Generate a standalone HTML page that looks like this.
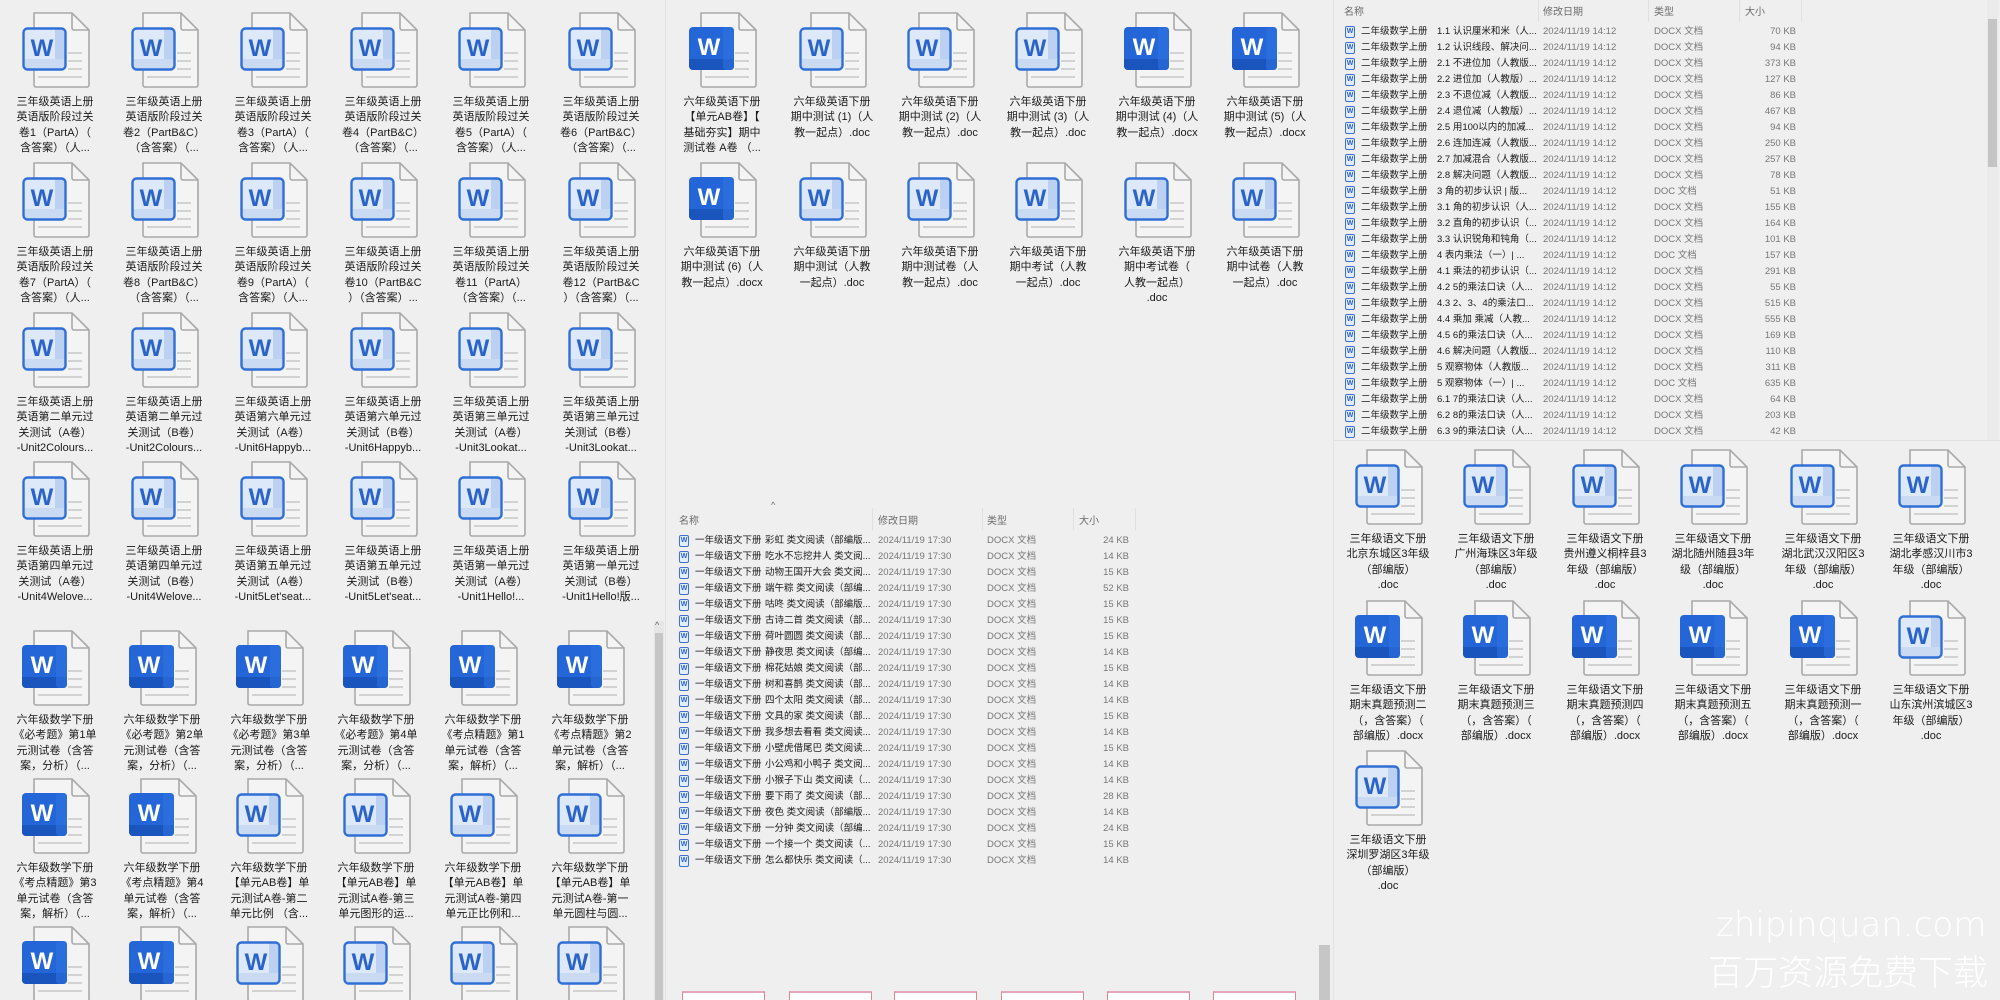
<!DOCTYPE html>
<html><head><meta charset="utf-8">
<style>
*{margin:0;padding:0;box-sizing:border-box}
html,body{width:2000px;height:1000px;overflow:hidden}
body{background:#efefef;font-family:"Liberation Sans","Noto Sans CJK SC",sans-serif;color:#1a1a1a}
#w{position:relative;width:2000px;height:1000px;overflow:hidden}
.it{position:absolute;width:110px;height:76px}
.it svg{position:absolute;left:22px;top:0;width:70px;height:76px}
.it p{position:absolute;left:0;top:83px;width:110px;text-align:center;font-size:11px;line-height:15.3px;white-space:nowrap}
.r{position:absolute;height:16px;font-size:9.5px;line-height:16px;white-space:nowrap}
.r span{position:absolute;top:0}
.r .n{overflow:hidden;width:108px}
.r .i{width:10px;height:12px;top:2px;border:1.3px solid #3d72d0;border-radius:2px;background:#e3ecfa;font-size:7px;line-height:9px;text-align:center;color:#2a64c8;font-weight:bold}
.d,.t{color:#777}
.s{color:#777;text-align:right;width:60px}
.h{position:absolute;font-size:10px;color:#6b6b6b}
.box{position:absolute;top:991px;width:83px;height:12px;border-top:2px solid #e4a5bd;border-left:1px solid #d88;border-right:1px solid #d88;background:#fff}
</style></head><body><div id="w">
<svg width="0" height="0" style="position:absolute">
<defs>
<symbol id="wo" viewBox="0 0 70 76">
<path d="M12 1H50L67 18V73a2 2 0 0 1-2 2H14a2 2 0 0 1-2-2Z" fill="#f4f4f4" stroke="#a9a9a9" stroke-width="1.6"/>
<path d="M50 1V16a2 2 0 0 0 2 2H67" fill="none" stroke="#a9a9a9" stroke-width="1.6"/>
<path d="M46 41H60M46 49H60M46 57H60M16 65H60" stroke="#d2d2d2" stroke-width="2"/>
<rect x="1.5" y="16.5" width="42" height="41" rx="4" fill="#dde8f9"/>
<rect x="33" y="17" width="10" height="40" fill="#bcd1f1"/>
<rect x="2" y="47" width="41" height="10" fill="#cbdaf3"/>
<rect x="1.5" y="16.5" width="42" height="41" rx="4" fill="none" stroke="#2f6fd6" stroke-width="2.4"/>
<text x="20" y="44" font-family="Liberation Sans" font-weight="bold" font-size="24" fill="#2a64c8" text-anchor="middle">W</text>
</symbol>
<symbol id="wf" viewBox="0 0 70 76">
<path d="M12 1H50L67 18V73a2 2 0 0 1-2 2H14a2 2 0 0 1-2-2Z" fill="#f4f4f4" stroke="#a9a9a9" stroke-width="1.6"/>
<path d="M50 1V16a2 2 0 0 0 2 2H67" fill="none" stroke="#a9a9a9" stroke-width="1.6"/>
<path d="M46 41H60M46 49H60M46 57H60M16 65H60" stroke="#d2d2d2" stroke-width="2"/>
<rect x="0" y="15" width="45" height="43" rx="4" fill="#2466d8"/>
<path d="M0 47H45V54a4 4 0 0 1-4 4H4a4 4 0 0 1-4-4Z" fill="#1a55bd"/>
<rect x="34" y="15" width="11" height="43" rx="3" fill="#2f72e0" opacity=".6"/>
<text x="20" y="43" font-family="Liberation Sans" font-weight="bold" font-size="24" fill="#fff" text-anchor="middle">W</text>
</symbol>
</defs></svg>

<div style="position:absolute;left:665px;top:0;width:1px;height:1000px;background:#e2e2e2"></div>
<div style="position:absolute;left:1333px;top:0;width:1px;height:1000px;background:#e2e2e2"></div>
<div style="position:absolute;left:654px;top:621px;width:10px;height:379px;background:#e6e6e6"></div>
<div style="position:absolute;left:655px;top:633px;width:8px;height:367px;background:#c6c6c6"></div>
<div style="position:absolute;left:655px;top:620px;font-size:9px;color:#666">^</div>
<div style="position:absolute;left:1319px;top:945px;width:11px;height:55px;background:#c6c6c6"></div>
<div style="position:absolute;left:1987px;top:0;width:11px;height:440px;background:#eaeaea"></div>
<div style="position:absolute;left:1988px;top:19px;width:9px;height:148px;background:#c4c4c4"></div>

<div class="it" style="left:0;top:12px"><svg><use href="#wo"/></svg><p>三年级英语上册<br>英语版阶段过关<br>卷1（PartA）（<br>含答案）（人...</p></div>
<div class="it" style="left:109px;top:12px"><svg><use href="#wo"/></svg><p>三年级英语上册<br>英语版阶段过关<br>卷2（PartB&amp;C）<br>（含答案）（...</p></div>
<div class="it" style="left:218px;top:12px"><svg><use href="#wo"/></svg><p>三年级英语上册<br>英语版阶段过关<br>卷3（PartA）（<br>含答案）（人...</p></div>
<div class="it" style="left:328px;top:12px"><svg><use href="#wo"/></svg><p>三年级英语上册<br>英语版阶段过关<br>卷4（PartB&amp;C）<br>（含答案）（...</p></div>
<div class="it" style="left:436px;top:12px"><svg><use href="#wo"/></svg><p>三年级英语上册<br>英语版阶段过关<br>卷5（PartA）（<br>含答案）（人...</p></div>
<div class="it" style="left:546px;top:12px"><svg><use href="#wo"/></svg><p>三年级英语上册<br>英语版阶段过关<br>卷6（PartB&amp;C）<br>（含答案）（...</p></div>

<div class="it" style="left:0;top:162px"><svg><use href="#wo"/></svg><p>三年级英语上册<br>英语版阶段过关<br>卷7（PartA）（<br>含答案）（人...</p></div>
<div class="it" style="left:109px;top:162px"><svg><use href="#wo"/></svg><p>三年级英语上册<br>英语版阶段过关<br>卷8（PartB&amp;C）<br>（含答案）（...</p></div>
<div class="it" style="left:218px;top:162px"><svg><use href="#wo"/></svg><p>三年级英语上册<br>英语版阶段过关<br>卷9（PartA）（<br>含答案）（人...</p></div>
<div class="it" style="left:328px;top:162px"><svg><use href="#wo"/></svg><p>三年级英语上册<br>英语版阶段过关<br>卷10（PartB&amp;C<br>）（含答案）...</p></div>
<div class="it" style="left:436px;top:162px"><svg><use href="#wo"/></svg><p>三年级英语上册<br>英语版阶段过关<br>卷11（PartA）<br>（含答案）（...</p></div>
<div class="it" style="left:546px;top:162px"><svg><use href="#wo"/></svg><p>三年级英语上册<br>英语版阶段过关<br>卷12（PartB&amp;C<br>）（含答案）（...</p></div>

<div class="it" style="left:0;top:312px"><svg><use href="#wo"/></svg><p>三年级英语上册<br>英语第二单元过<br>关测试（A卷）<br>-Unit2Colours...</p></div>
<div class="it" style="left:109px;top:312px"><svg><use href="#wo"/></svg><p>三年级英语上册<br>英语第二单元过<br>关测试（B卷）<br>-Unit2Colours...</p></div>
<div class="it" style="left:218px;top:312px"><svg><use href="#wo"/></svg><p>三年级英语上册<br>英语第六单元过<br>关测试（A卷）<br>-Unit6Happyb...</p></div>
<div class="it" style="left:328px;top:312px"><svg><use href="#wo"/></svg><p>三年级英语上册<br>英语第六单元过<br>关测试（B卷）<br>-Unit6Happyb...</p></div>
<div class="it" style="left:436px;top:312px"><svg><use href="#wo"/></svg><p>三年级英语上册<br>英语第三单元过<br>关测试（A卷）<br>-Unit3Lookat...</p></div>
<div class="it" style="left:546px;top:312px"><svg><use href="#wo"/></svg><p>三年级英语上册<br>英语第三单元过<br>关测试（B卷）<br>-Unit3Lookat...</p></div>

<div class="it" style="left:0;top:461px"><svg><use href="#wo"/></svg><p>三年级英语上册<br>英语第四单元过<br>关测试（A卷）<br>-Unit4Welove...</p></div>
<div class="it" style="left:109px;top:461px"><svg><use href="#wo"/></svg><p>三年级英语上册<br>英语第四单元过<br>关测试（B卷）<br>-Unit4Welove...</p></div>
<div class="it" style="left:218px;top:461px"><svg><use href="#wo"/></svg><p>三年级英语上册<br>英语第五单元过<br>关测试（A卷）<br>-Unit5Let'seat...</p></div>
<div class="it" style="left:328px;top:461px"><svg><use href="#wo"/></svg><p>三年级英语上册<br>英语第五单元过<br>关测试（B卷）<br>-Unit5Let'seat...</p></div>
<div class="it" style="left:436px;top:461px"><svg><use href="#wo"/></svg><p>三年级英语上册<br>英语第一单元过<br>关测试（A卷）<br>-Unit1Hello!...</p></div>
<div class="it" style="left:546px;top:461px"><svg><use href="#wo"/></svg><p>三年级英语上册<br>英语第一单元过<br>关测试（B卷）<br>-Unit1Hello!版...</p></div>

<div class="it" style="left:0;top:630px"><svg><use href="#wf"/></svg><p>六年级数学下册<br>《必考题》第1单<br>元测试卷（含答<br>案，分析）（...</p></div>
<div class="it" style="left:107px;top:630px"><svg><use href="#wf"/></svg><p>六年级数学下册<br>《必考题》第2单<br>元测试卷（含答<br>案，分析）（...</p></div>
<div class="it" style="left:214px;top:630px"><svg><use href="#wf"/></svg><p>六年级数学下册<br>《必考题》第3单<br>元测试卷（含答<br>案，分析）（...</p></div>
<div class="it" style="left:321px;top:630px"><svg><use href="#wf"/></svg><p>六年级数学下册<br>《必考题》第4单<br>元测试卷（含答<br>案，分析）（...</p></div>
<div class="it" style="left:428px;top:630px"><svg><use href="#wf"/></svg><p>六年级数学下册<br>《考点精题》第1<br>单元试卷（含答<br>案，解析）（...</p></div>
<div class="it" style="left:535px;top:630px"><svg><use href="#wf"/></svg><p>六年级数学下册<br>《考点精题》第2<br>单元试卷（含答<br>案，解析）（...</p></div>

<div class="it" style="left:0;top:778px"><svg><use href="#wf"/></svg><p>六年级数学下册<br>《考点精题》第3<br>单元试卷（含答<br>案，解析）（...</p></div>
<div class="it" style="left:107px;top:778px"><svg><use href="#wf"/></svg><p>六年级数学下册<br>《考点精题》第4<br>单元试卷（含答<br>案，解析）（...</p></div>
<div class="it" style="left:214px;top:778px"><svg><use href="#wo"/></svg><p>六年级数学下册<br>【单元AB卷】单<br>元测试A卷-第二<br>单元比例 （含...</p></div>
<div class="it" style="left:321px;top:778px"><svg><use href="#wo"/></svg><p>六年级数学下册<br>【单元AB卷】单<br>元测试A卷-第三<br>单元图形的运...</p></div>
<div class="it" style="left:428px;top:778px"><svg><use href="#wo"/></svg><p>六年级数学下册<br>【单元AB卷】单<br>元测试A卷-第四<br>单元正比例和...</p></div>
<div class="it" style="left:535px;top:778px"><svg><use href="#wo"/></svg><p>六年级数学下册<br>【单元AB卷】单<br>元测试A卷-第一<br>单元圆柱与圆...</p></div>

<div class="it" style="left:0;top:926px"><svg><use href="#wf"/></svg></div>
<div class="it" style="left:107px;top:926px"><svg><use href="#wf"/></svg></div>
<div class="it" style="left:214px;top:926px"><svg><use href="#wo"/></svg></div>
<div class="it" style="left:321px;top:926px"><svg><use href="#wo"/></svg></div>
<div class="it" style="left:428px;top:926px"><svg><use href="#wo"/></svg></div>
<div class="it" style="left:535px;top:926px"><svg><use href="#wo"/></svg></div>

<div class="it" style="left:667px;top:12px"><svg><use href="#wf"/></svg><p>六年级英语下册<br>【单元AB卷】【<br>基础夯实】期中<br>测试卷 A卷 （...</p></div>
<div class="it" style="left:777px;top:12px"><svg><use href="#wo"/></svg><p>六年级英语下册<br>期中测试 (1)（人<br>教一起点）.doc</p></div>
<div class="it" style="left:885px;top:12px"><svg><use href="#wo"/></svg><p>六年级英语下册<br>期中测试 (2)（人<br>教一起点）.doc</p></div>
<div class="it" style="left:993px;top:12px"><svg><use href="#wo"/></svg><p>六年级英语下册<br>期中测试 (3)（人<br>教一起点）.doc</p></div>
<div class="it" style="left:1102px;top:12px"><svg><use href="#wf"/></svg><p>六年级英语下册<br>期中测试 (4)（人<br>教一起点）.docx</p></div>
<div class="it" style="left:1210px;top:12px"><svg><use href="#wf"/></svg><p>六年级英语下册<br>期中测试 (5)（人<br>教一起点）.docx</p></div>

<div class="it" style="left:667px;top:162px"><svg><use href="#wf"/></svg><p>六年级英语下册<br>期中测试 (6)（人<br>教一起点）.docx</p></div>
<div class="it" style="left:777px;top:162px"><svg><use href="#wo"/></svg><p>六年级英语下册<br>期中测试（人教<br>一起点）.doc</p></div>
<div class="it" style="left:885px;top:162px"><svg><use href="#wo"/></svg><p>六年级英语下册<br>期中测试卷（人<br>教一起点）.doc</p></div>
<div class="it" style="left:993px;top:162px"><svg><use href="#wo"/></svg><p>六年级英语下册<br>期中考试（人教<br>一起点）.doc</p></div>
<div class="it" style="left:1102px;top:162px"><svg><use href="#wo"/></svg><p>六年级英语下册<br>期中考试卷（<br>人教一起点）<br>.doc</p></div>
<div class="it" style="left:1210px;top:162px"><svg><use href="#wo"/></svg><p>六年级英语下册<br>期中试卷（人教<br>一起点）.doc</p></div>

<div class="h" style="left:771px;top:500px;font-size:9px">^</div>
<div class="h" style="left:679px;top:512px">名称</div>
<div class="h" style="left:878px;top:512px">修改日期</div>
<div class="h" style="left:987px;top:512px">类型</div>
<div class="h" style="left:1079px;top:512px">大小</div>
<div style="position:absolute;left:872px;top:508px;width:1px;height:22px;background:#e0e0e0"></div>
<div style="position:absolute;left:982px;top:508px;width:1px;height:22px;background:#e0e0e0"></div>
<div style="position:absolute;left:1073px;top:508px;width:1px;height:22px;background:#e0e0e0"></div>
<div style="position:absolute;left:1135px;top:508px;width:1px;height:22px;background:#e0e0e0"></div>

<div style="position:absolute;left:679px;top:533px">
<div class="r" style="top:0"><span class="i" style="left:0">W</span><span style="left:16px">一年级语文下册</span><span class="n" style="left:86px">彩虹 类文阅读（部编版...</span><span class="d" style="left:199px">2024/11/19 17:30</span><span class="t" style="left:308px">DOCX 文档</span><span class="s" style="left:390px">24 KB</span></div>
<div class="r" style="top:16px"><span class="i" style="left:0">W</span><span style="left:16px">一年级语文下册</span><span class="n" style="left:86px">吃水不忘挖井人 类文阅...</span><span class="d" style="left:199px">2024/11/19 17:30</span><span class="t" style="left:308px">DOCX 文档</span><span class="s" style="left:390px">14 KB</span></div>
<div class="r" style="top:32px"><span class="i" style="left:0">W</span><span style="left:16px">一年级语文下册</span><span class="n" style="left:86px">动物王国开大会 类文阅...</span><span class="d" style="left:199px">2024/11/19 17:30</span><span class="t" style="left:308px">DOCX 文档</span><span class="s" style="left:390px">15 KB</span></div>
<div class="r" style="top:48px"><span class="i" style="left:0">W</span><span style="left:16px">一年级语文下册</span><span class="n" style="left:86px">端午粽 类文阅读（部编...</span><span class="d" style="left:199px">2024/11/19 17:30</span><span class="t" style="left:308px">DOCX 文档</span><span class="s" style="left:390px">52 KB</span></div>
<div class="r" style="top:64px"><span class="i" style="left:0">W</span><span style="left:16px">一年级语文下册</span><span class="n" style="left:86px">咕咚 类文阅读（部编版...</span><span class="d" style="left:199px">2024/11/19 17:30</span><span class="t" style="left:308px">DOCX 文档</span><span class="s" style="left:390px">15 KB</span></div>
<div class="r" style="top:80px"><span class="i" style="left:0">W</span><span style="left:16px">一年级语文下册</span><span class="n" style="left:86px">古诗二首 类文阅读（部...</span><span class="d" style="left:199px">2024/11/19 17:30</span><span class="t" style="left:308px">DOCX 文档</span><span class="s" style="left:390px">15 KB</span></div>
<div class="r" style="top:96px"><span class="i" style="left:0">W</span><span style="left:16px">一年级语文下册</span><span class="n" style="left:86px">荷叶圆圆 类文阅读（部...</span><span class="d" style="left:199px">2024/11/19 17:30</span><span class="t" style="left:308px">DOCX 文档</span><span class="s" style="left:390px">15 KB</span></div>
<div class="r" style="top:112px"><span class="i" style="left:0">W</span><span style="left:16px">一年级语文下册</span><span class="n" style="left:86px">静夜思 类文阅读（部编...</span><span class="d" style="left:199px">2024/11/19 17:30</span><span class="t" style="left:308px">DOCX 文档</span><span class="s" style="left:390px">14 KB</span></div>
<div class="r" style="top:128px"><span class="i" style="left:0">W</span><span style="left:16px">一年级语文下册</span><span class="n" style="left:86px">棉花姑娘 类文阅读（部...</span><span class="d" style="left:199px">2024/11/19 17:30</span><span class="t" style="left:308px">DOCX 文档</span><span class="s" style="left:390px">15 KB</span></div>
<div class="r" style="top:144px"><span class="i" style="left:0">W</span><span style="left:16px">一年级语文下册</span><span class="n" style="left:86px">树和喜鹊 类文阅读（部...</span><span class="d" style="left:199px">2024/11/19 17:30</span><span class="t" style="left:308px">DOCX 文档</span><span class="s" style="left:390px">14 KB</span></div>
<div class="r" style="top:160px"><span class="i" style="left:0">W</span><span style="left:16px">一年级语文下册</span><span class="n" style="left:86px">四个太阳 类文阅读（部...</span><span class="d" style="left:199px">2024/11/19 17:30</span><span class="t" style="left:308px">DOCX 文档</span><span class="s" style="left:390px">14 KB</span></div>
<div class="r" style="top:176px"><span class="i" style="left:0">W</span><span style="left:16px">一年级语文下册</span><span class="n" style="left:86px">文具的家 类文阅读（部...</span><span class="d" style="left:199px">2024/11/19 17:30</span><span class="t" style="left:308px">DOCX 文档</span><span class="s" style="left:390px">15 KB</span></div>
<div class="r" style="top:192px"><span class="i" style="left:0">W</span><span style="left:16px">一年级语文下册</span><span class="n" style="left:86px">我多想去看看 类文阅读...</span><span class="d" style="left:199px">2024/11/19 17:30</span><span class="t" style="left:308px">DOCX 文档</span><span class="s" style="left:390px">14 KB</span></div>
<div class="r" style="top:208px"><span class="i" style="left:0">W</span><span style="left:16px">一年级语文下册</span><span class="n" style="left:86px">小壁虎借尾巴 类文阅读...</span><span class="d" style="left:199px">2024/11/19 17:30</span><span class="t" style="left:308px">DOCX 文档</span><span class="s" style="left:390px">15 KB</span></div>
<div class="r" style="top:224px"><span class="i" style="left:0">W</span><span style="left:16px">一年级语文下册</span><span class="n" style="left:86px">小公鸡和小鸭子 类文阅...</span><span class="d" style="left:199px">2024/11/19 17:30</span><span class="t" style="left:308px">DOCX 文档</span><span class="s" style="left:390px">14 KB</span></div>
<div class="r" style="top:240px"><span class="i" style="left:0">W</span><span style="left:16px">一年级语文下册</span><span class="n" style="left:86px">小猴子下山 类文阅读（...</span><span class="d" style="left:199px">2024/11/19 17:30</span><span class="t" style="left:308px">DOCX 文档</span><span class="s" style="left:390px">14 KB</span></div>
<div class="r" style="top:256px"><span class="i" style="left:0">W</span><span style="left:16px">一年级语文下册</span><span class="n" style="left:86px">要下雨了 类文阅读（部...</span><span class="d" style="left:199px">2024/11/19 17:30</span><span class="t" style="left:308px">DOCX 文档</span><span class="s" style="left:390px">28 KB</span></div>
<div class="r" style="top:272px"><span class="i" style="left:0">W</span><span style="left:16px">一年级语文下册</span><span class="n" style="left:86px">夜色 类文阅读（部编版...</span><span class="d" style="left:199px">2024/11/19 17:30</span><span class="t" style="left:308px">DOCX 文档</span><span class="s" style="left:390px">14 KB</span></div>
<div class="r" style="top:288px"><span class="i" style="left:0">W</span><span style="left:16px">一年级语文下册</span><span class="n" style="left:86px">一分钟 类文阅读（部编...</span><span class="d" style="left:199px">2024/11/19 17:30</span><span class="t" style="left:308px">DOCX 文档</span><span class="s" style="left:390px">24 KB</span></div>
<div class="r" style="top:304px"><span class="i" style="left:0">W</span><span style="left:16px">一年级语文下册</span><span class="n" style="left:86px">一个接一个 类文阅读（...</span><span class="d" style="left:199px">2024/11/19 17:30</span><span class="t" style="left:308px">DOCX 文档</span><span class="s" style="left:390px">15 KB</span></div>
<div class="r" style="top:320px"><span class="i" style="left:0">W</span><span style="left:16px">一年级语文下册</span><span class="n" style="left:86px">怎么都快乐 类文阅读（...</span><span class="d" style="left:199px">2024/11/19 17:30</span><span class="t" style="left:308px">DOCX 文档</span><span class="s" style="left:390px">14 KB</span></div>
</div>

<div class="box" style="left:682px"></div>
<div class="box" style="left:789px"></div>
<div class="box" style="left:894px"></div>
<div class="box" style="left:1001px"></div>
<div class="box" style="left:1107px"></div>
<div class="box" style="left:1213px"></div>

<div class="h" style="left:1438px;top:-5px;font-size:9px">^</div>
<div class="h" style="left:1344px;top:3px">名称</div>
<div class="h" style="left:1543px;top:3px">修改日期</div>
<div class="h" style="left:1654px;top:3px">类型</div>
<div class="h" style="left:1745px;top:3px">大小</div>
<div style="position:absolute;left:1538px;top:0;width:1px;height:22px;background:#e0e0e0"></div>
<div style="position:absolute;left:1648px;top:0;width:1px;height:22px;background:#e0e0e0"></div>
<div style="position:absolute;left:1739px;top:0;width:1px;height:22px;background:#e0e0e0"></div>
<div style="position:absolute;left:1801px;top:0;width:1px;height:22px;background:#e0e0e0"></div>

<div style="position:absolute;left:1345px;top:24px">
<div class="r" style="top:0"><span class="i" style="left:0">W</span><span style="left:16px">二年级数学上册</span><span class="n" style="left:92px">1.1 认识厘米和米（人...</span><span class="d" style="left:198px">2024/11/19 14:12</span><span class="t" style="left:309px">DOCX 文档</span><span class="s" style="left:391px">70 KB</span></div>
<div class="r" style="top:16px"><span class="i" style="left:0">W</span><span style="left:16px">二年级数学上册</span><span class="n" style="left:92px">1.2 认识线段、解决问...</span><span class="d" style="left:198px">2024/11/19 14:12</span><span class="t" style="left:309px">DOCX 文档</span><span class="s" style="left:391px">94 KB</span></div>
<div class="r" style="top:32px"><span class="i" style="left:0">W</span><span style="left:16px">二年级数学上册</span><span class="n" style="left:92px">2.1 不进位加（人教版...</span><span class="d" style="left:198px">2024/11/19 14:12</span><span class="t" style="left:309px">DOCX 文档</span><span class="s" style="left:391px">373 KB</span></div>
<div class="r" style="top:48px"><span class="i" style="left:0">W</span><span style="left:16px">二年级数学上册</span><span class="n" style="left:92px">2.2 进位加（人教版）...</span><span class="d" style="left:198px">2024/11/19 14:12</span><span class="t" style="left:309px">DOCX 文档</span><span class="s" style="left:391px">127 KB</span></div>
<div class="r" style="top:64px"><span class="i" style="left:0">W</span><span style="left:16px">二年级数学上册</span><span class="n" style="left:92px">2.3 不退位减（人教版...</span><span class="d" style="left:198px">2024/11/19 14:12</span><span class="t" style="left:309px">DOCX 文档</span><span class="s" style="left:391px">86 KB</span></div>
<div class="r" style="top:80px"><span class="i" style="left:0">W</span><span style="left:16px">二年级数学上册</span><span class="n" style="left:92px">2.4 退位减（人教版）...</span><span class="d" style="left:198px">2024/11/19 14:12</span><span class="t" style="left:309px">DOCX 文档</span><span class="s" style="left:391px">467 KB</span></div>
<div class="r" style="top:96px"><span class="i" style="left:0">W</span><span style="left:16px">二年级数学上册</span><span class="n" style="left:92px">2.5 用100以内的加减...</span><span class="d" style="left:198px">2024/11/19 14:12</span><span class="t" style="left:309px">DOCX 文档</span><span class="s" style="left:391px">94 KB</span></div>
<div class="r" style="top:112px"><span class="i" style="left:0">W</span><span style="left:16px">二年级数学上册</span><span class="n" style="left:92px">2.6 连加连减（人教版...</span><span class="d" style="left:198px">2024/11/19 14:12</span><span class="t" style="left:309px">DOCX 文档</span><span class="s" style="left:391px">250 KB</span></div>
<div class="r" style="top:128px"><span class="i" style="left:0">W</span><span style="left:16px">二年级数学上册</span><span class="n" style="left:92px">2.7 加减混合（人教版...</span><span class="d" style="left:198px">2024/11/19 14:12</span><span class="t" style="left:309px">DOCX 文档</span><span class="s" style="left:391px">257 KB</span></div>
<div class="r" style="top:144px"><span class="i" style="left:0">W</span><span style="left:16px">二年级数学上册</span><span class="n" style="left:92px">2.8 解决问题（人教版...</span><span class="d" style="left:198px">2024/11/19 14:12</span><span class="t" style="left:309px">DOCX 文档</span><span class="s" style="left:391px">78 KB</span></div>
<div class="r" style="top:160px"><span class="i" style="left:0">W</span><span style="left:16px">二年级数学上册</span><span class="n" style="left:92px">3 角的初步认识 | 版...</span><span class="d" style="left:198px">2024/11/19 14:12</span><span class="t" style="left:309px">DOC 文档</span><span class="s" style="left:391px">51 KB</span></div>
<div class="r" style="top:176px"><span class="i" style="left:0">W</span><span style="left:16px">二年级数学上册</span><span class="n" style="left:92px">3.1 角的初步认识（人...</span><span class="d" style="left:198px">2024/11/19 14:12</span><span class="t" style="left:309px">DOCX 文档</span><span class="s" style="left:391px">155 KB</span></div>
<div class="r" style="top:192px"><span class="i" style="left:0">W</span><span style="left:16px">二年级数学上册</span><span class="n" style="left:92px">3.2 直角的初步认识（...</span><span class="d" style="left:198px">2024/11/19 14:12</span><span class="t" style="left:309px">DOCX 文档</span><span class="s" style="left:391px">164 KB</span></div>
<div class="r" style="top:208px"><span class="i" style="left:0">W</span><span style="left:16px">二年级数学上册</span><span class="n" style="left:92px">3.3 认识锐角和钝角（...</span><span class="d" style="left:198px">2024/11/19 14:12</span><span class="t" style="left:309px">DOCX 文档</span><span class="s" style="left:391px">101 KB</span></div>
<div class="r" style="top:224px"><span class="i" style="left:0">W</span><span style="left:16px">二年级数学上册</span><span class="n" style="left:92px">4 表内乘法（一）| ...</span><span class="d" style="left:198px">2024/11/19 14:12</span><span class="t" style="left:309px">DOC 文档</span><span class="s" style="left:391px">157 KB</span></div>
<div class="r" style="top:240px"><span class="i" style="left:0">W</span><span style="left:16px">二年级数学上册</span><span class="n" style="left:92px">4.1 乘法的初步认识（...</span><span class="d" style="left:198px">2024/11/19 14:12</span><span class="t" style="left:309px">DOCX 文档</span><span class="s" style="left:391px">291 KB</span></div>
<div class="r" style="top:256px"><span class="i" style="left:0">W</span><span style="left:16px">二年级数学上册</span><span class="n" style="left:92px">4.2 5的乘法口诀（人...</span><span class="d" style="left:198px">2024/11/19 14:12</span><span class="t" style="left:309px">DOCX 文档</span><span class="s" style="left:391px">55 KB</span></div>
<div class="r" style="top:272px"><span class="i" style="left:0">W</span><span style="left:16px">二年级数学上册</span><span class="n" style="left:92px">4.3 2、3、4的乘法口...</span><span class="d" style="left:198px">2024/11/19 14:12</span><span class="t" style="left:309px">DOCX 文档</span><span class="s" style="left:391px">515 KB</span></div>
<div class="r" style="top:288px"><span class="i" style="left:0">W</span><span style="left:16px">二年级数学上册</span><span class="n" style="left:92px">4.4 乘加 乘减（人教...</span><span class="d" style="left:198px">2024/11/19 14:12</span><span class="t" style="left:309px">DOCX 文档</span><span class="s" style="left:391px">555 KB</span></div>
<div class="r" style="top:304px"><span class="i" style="left:0">W</span><span style="left:16px">二年级数学上册</span><span class="n" style="left:92px">4.5 6的乘法口诀（人...</span><span class="d" style="left:198px">2024/11/19 14:12</span><span class="t" style="left:309px">DOCX 文档</span><span class="s" style="left:391px">169 KB</span></div>
<div class="r" style="top:320px"><span class="i" style="left:0">W</span><span style="left:16px">二年级数学上册</span><span class="n" style="left:92px">4.6 解决问题（人教版...</span><span class="d" style="left:198px">2024/11/19 14:12</span><span class="t" style="left:309px">DOCX 文档</span><span class="s" style="left:391px">110 KB</span></div>
<div class="r" style="top:336px"><span class="i" style="left:0">W</span><span style="left:16px">二年级数学上册</span><span class="n" style="left:92px">5 观察物体（人教版...</span><span class="d" style="left:198px">2024/11/19 14:12</span><span class="t" style="left:309px">DOCX 文档</span><span class="s" style="left:391px">311 KB</span></div>
<div class="r" style="top:352px"><span class="i" style="left:0">W</span><span style="left:16px">二年级数学上册</span><span class="n" style="left:92px">5 观察物体（一）| ...</span><span class="d" style="left:198px">2024/11/19 14:12</span><span class="t" style="left:309px">DOC 文档</span><span class="s" style="left:391px">635 KB</span></div>
<div class="r" style="top:368px"><span class="i" style="left:0">W</span><span style="left:16px">二年级数学上册</span><span class="n" style="left:92px">6.1 7的乘法口诀（人...</span><span class="d" style="left:198px">2024/11/19 14:12</span><span class="t" style="left:309px">DOCX 文档</span><span class="s" style="left:391px">64 KB</span></div>
<div class="r" style="top:384px"><span class="i" style="left:0">W</span><span style="left:16px">二年级数学上册</span><span class="n" style="left:92px">6.2 8的乘法口诀（人...</span><span class="d" style="left:198px">2024/11/19 14:12</span><span class="t" style="left:309px">DOCX 文档</span><span class="s" style="left:391px">203 KB</span></div>
<div class="r" style="top:400px"><span class="i" style="left:0">W</span><span style="left:16px">二年级数学上册</span><span class="n" style="left:92px">6.3 9的乘法口诀（人...</span><span class="d" style="left:198px">2024/11/19 14:12</span><span class="t" style="left:309px">DOCX 文档</span><span class="s" style="left:391px">42 KB</span></div>
</div>
<div style="position:absolute;left:1334px;top:440px;width:666px;height:1px;background:#e2e2e2"></div>

<div class="it" style="left:1333px;top:449px"><svg><use href="#wo"/></svg><p>三年级语文下册<br>北京东城区3年级<br>（部编版）<br>.doc</p></div>
<div class="it" style="left:1441px;top:449px"><svg><use href="#wo"/></svg><p>三年级语文下册<br>广州海珠区3年级<br>（部编版）<br>.doc</p></div>
<div class="it" style="left:1550px;top:449px"><svg><use href="#wo"/></svg><p>三年级语文下册<br>贵州遵义桐梓县3<br>年级（部编版）<br>.doc</p></div>
<div class="it" style="left:1658px;top:449px"><svg><use href="#wo"/></svg><p>三年级语文下册<br>湖北随州随县3年<br>级（部编版）<br>.doc</p></div>
<div class="it" style="left:1768px;top:449px"><svg><use href="#wo"/></svg><p>三年级语文下册<br>湖北武汉汉阳区3<br>年级（部编版）<br>.doc</p></div>
<div class="it" style="left:1876px;top:449px"><svg><use href="#wo"/></svg><p>三年级语文下册<br>湖北孝感汉川市3<br>年级（部编版）<br>.doc</p></div>

<div class="it" style="left:1333px;top:600px"><svg><use href="#wf"/></svg><p>三年级语文下册<br>期末真题预测二<br>（，含答案）（<br>部编版）.docx</p></div>
<div class="it" style="left:1441px;top:600px"><svg><use href="#wf"/></svg><p>三年级语文下册<br>期末真题预测三<br>（，含答案）（<br>部编版）.docx</p></div>
<div class="it" style="left:1550px;top:600px"><svg><use href="#wf"/></svg><p>三年级语文下册<br>期末真题预测四<br>（，含答案）（<br>部编版）.docx</p></div>
<div class="it" style="left:1658px;top:600px"><svg><use href="#wf"/></svg><p>三年级语文下册<br>期末真题预测五<br>（，含答案）（<br>部编版）.docx</p></div>
<div class="it" style="left:1768px;top:600px"><svg><use href="#wf"/></svg><p>三年级语文下册<br>期末真题预测一<br>（，含答案）（<br>部编版）.docx</p></div>
<div class="it" style="left:1876px;top:600px"><svg><use href="#wo"/></svg><p>三年级语文下册<br>山东滨州滨城区3<br>年级（部编版）<br>.doc</p></div>

<div class="it" style="left:1333px;top:750px"><svg><use href="#wo"/></svg><p>三年级语文下册<br>深圳罗湖区3年级<br>（部编版）<br>.doc</p></div>

<div style="position:absolute;left:1716px;top:905px;font-size:34px;line-height:40px;color:#fff;font-family:'DejaVu Sans','Liberation Sans',sans-serif;font-weight:300">zhipinquan.com</div>
<div style="position:absolute;left:1708px;top:951px;font-size:35px;line-height:40px;color:#fff;font-family:'Noto Sans CJK SC',sans-serif;font-weight:300">百万资源免费下载</div>
</div></body></html>
